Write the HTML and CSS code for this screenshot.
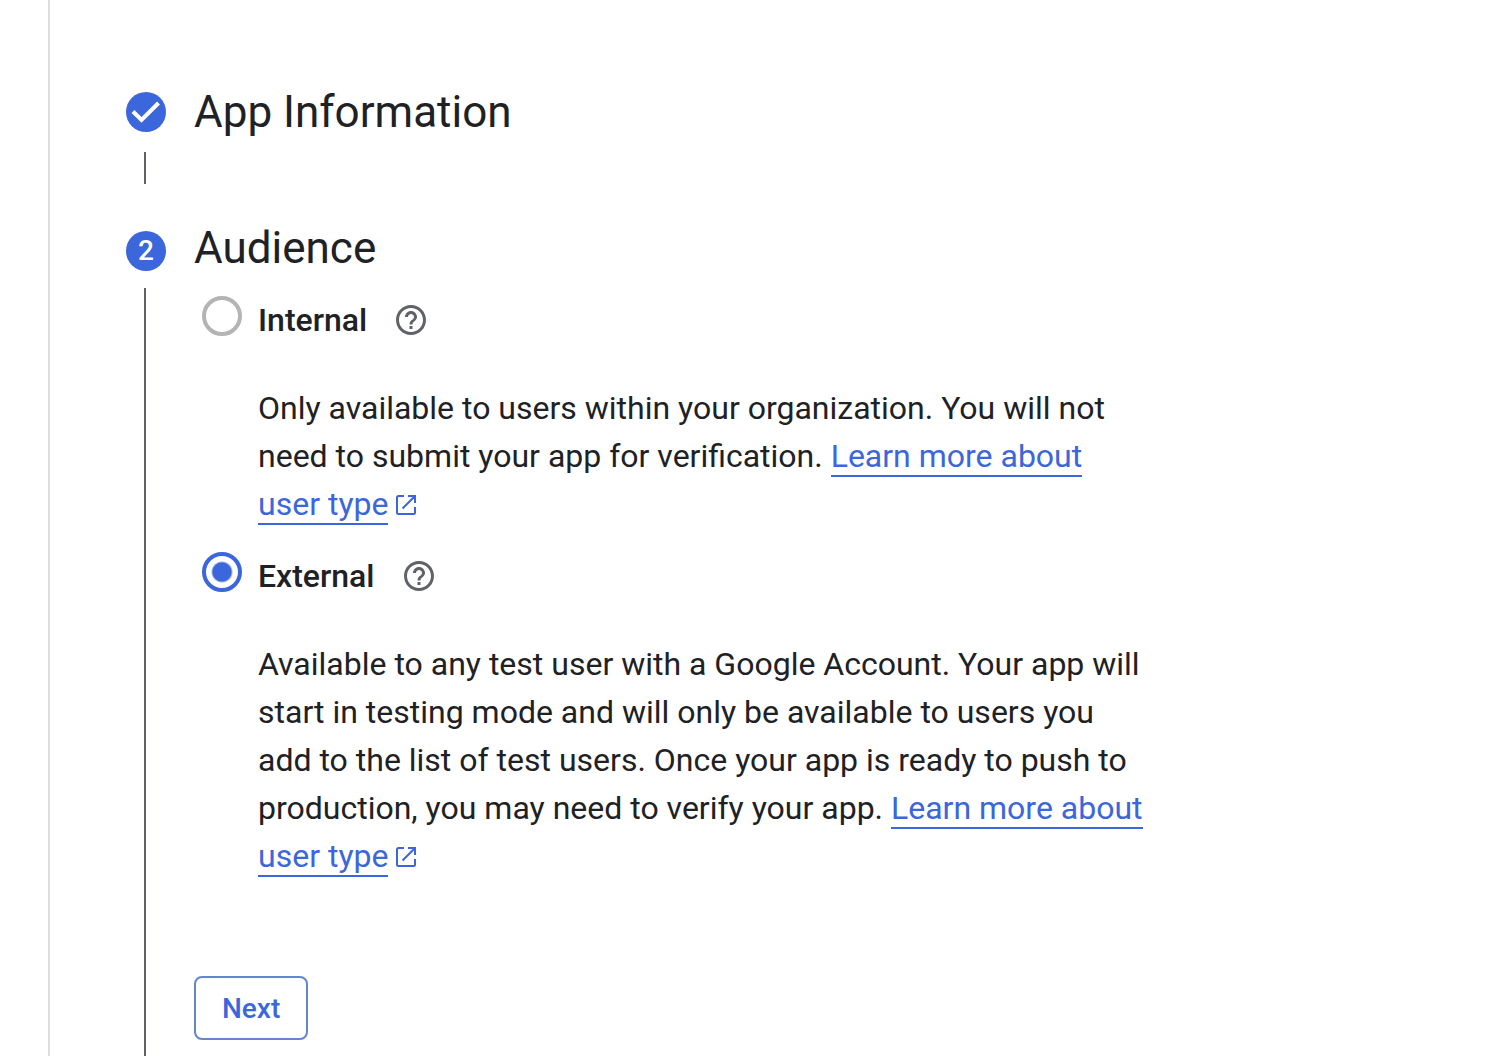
FILE: index.html
```html
<!DOCTYPE html>
<html lang="en">
<head>
    <meta charset="UTF-8">
    <meta name="viewport" content="width=device-width, initial-scale=1.0">
    <title>Project configuration</title>
    <link rel="stylesheet" href="styles.css">
</head>
<body>
    <main class="panel">
        <section class="step">
            <div class="rail">
                <span class="badge">
                    <svg viewBox="0 0 40 40" width="40" height="40" aria-hidden="true">
                        <path d="M7 19.500L15.500 28L32.500 11" fill="none" stroke="#fff" stroke-width="4"/>
                    </svg>
                </span>
                <span class="line line-short"></span>
            </div>
            <h2>App Information</h2>
        </section>

        <section class="step step-active">
            <div class="rail">
                <span class="badge">2</span>
                <span class="line"></span>
            </div>
            <form class="step-content" action="#">
                <h2>Audience</h2>

                <div class="option">
                    <input type="radio" id="internal" name="audience" value="internal">
                    <div class="option-body">
                        <div class="option-title">
                            <label for="internal">Internal</label>
                            <button type="button" class="help" aria-label="Help">
                                <svg viewBox="0 0 24 24" width="36" height="36" aria-hidden="true">
                                    <path d="M11 18h2v-2h-2v2zm1-16C6.480 2 2 6.480 2 12s4.480 10 10 10 10-4.480 10-10S17.520 2 12 2zm0 18c-4.410 0-8-3.590-8-8s3.590-8 8-8 8 3.590 8 8-3.590 8-8 8zm0-14c-2.210 0-4 1.790-4 4h2c0-1.100.9-2 2-2s2 .9 2 2c0 2-3 1.750-3 5h2c0-2.250 3-2.500 3-5 0-2.210-1.790-4-4-4z"/>
                                </svg>
                            </button>
                        </div>
                        <p>Only available to users within your organization. You will not need to submit your app for verification. <a href="#">Learn more about user type</a><svg class="launch" viewBox="0 0 20 20" width="20" height="20" aria-hidden="true"><path d="M8 1H2.500Q1 1 1 2.500V17.500Q1 19 2.500 19H17.500Q19 19 19 17.500V12M12 1h7v7M19 1L6.500 13.500"/></svg></p>
                    </div>
                </div>

                <div class="option">
                    <input type="radio" id="external" name="audience" value="external" checked>
                    <div class="option-body">
                        <div class="option-title">
                            <label for="external">External</label>
                            <button type="button" class="help" aria-label="Help">
                                <svg viewBox="0 0 24 24" width="36" height="36" aria-hidden="true">
                                    <path d="M11 18h2v-2h-2v2zm1-16C6.480 2 2 6.480 2 12s4.480 10 10 10 10-4.480 10-10S17.520 2 12 2zm0 18c-4.410 0-8-3.590-8-8s3.590-8 8-8 8 3.590 8 8-3.590 8-8 8zm0-14c-2.210 0-4 1.790-4 4h2c0-1.100.9-2 2-2s2 .9 2 2c0 2-3 1.750-3 5h2c0-2.250 3-2.500 3-5 0-2.210-1.790-4-4-4z"/>
                                </svg>
                            </button>
                        </div>
                        <p>Available to any test user with a Google Account. Your app will start in testing mode and will only be available to users you add to the list of test users. Once your app is ready to push to production, you may need to verify your app. <a href="#">Learn more about user type</a><svg class="launch" viewBox="0 0 20 20" width="20" height="20" aria-hidden="true"><path d="M8 1H2.500Q1 1 1 2.500V17.500Q1 19 2.500 19H17.500Q19 19 19 17.500V12M12 1h7v7M19 1L6.500 13.500"/></svg></p>
                    </div>
                </div>

                <button type="submit" class="next">Next</button>
            </form>
        </section>
    </main>
</body>
</html>
```
FILE: styles.css
```css
* {
    box-sizing: border-box;
}

body {
    margin: 0;
    background-color: #fff;
    color: #202124;
    font-family: Roboto, Arial, sans-serif;
    font-size: 32px;
    line-height: 48px;
}

.panel {
    display: flex;
    flex-direction: column;
    min-height: 100vh;
    margin-left: 48px;
    padding: 92px 76px 0;
    border-left: 2px solid #dadce0;
}

/* Stepper */
.step {
    display: flex;
    gap: 28px;
    margin-bottom: 44px;
}

.step-active {
    flex: 1;
    margin-bottom: 0;
}

.rail {
    display: flex;
    flex-direction: column;
    flex-shrink: 0;
    width: 40px;
}

.step-active .rail {
    padding-top: 3px;
}

.badge {
    width: 40px;
    height: 40px;
    border-radius: 50%;
    background-color: #3c66db;
    color: #fff;
    font-size: 28px;
    font-weight: 500;
    line-height: 40px;
    text-align: center;
}

.badge svg {
    display: block;
}

.line {
    flex: 1;
    width: 2px;
    margin: 17px 0 0 18px;
    background-color: #5f6368;
}

.line-short {
    flex: none;
    height: 32px;
    margin-top: 20px;
}

h2 {
    margin: 0;
    font-size: 44px;
    font-weight: 400;
    line-height: 40px;
}

.step-content {
    flex: 1;
    padding-bottom: 16px;
}

.step-content h2 {
    margin-bottom: 28px;
}

/* Audience options */
.option {
    display: flex;
    gap: 16px;
    margin-bottom: 24px;
    padding-left: 8px;
}

.option input {
    flex-shrink: 0;
    appearance: none;
    width: 40px;
    height: 40px;
    margin: 0;
    border: 4px solid #b4b4b4;
    border-radius: 50%;
    cursor: pointer;
}

.option input:checked {
    border-color: #3c66db;
    background: radial-gradient(circle, #3c66db 9px, #fff 11px);
}

.option-body {
    max-width: 888px;
}

.option-title {
    display: flex;
    align-items: center;
    gap: 26px;
    margin-bottom: 40px;
}

.option-title label {
    font-weight: 500;
}

.help {
    display: flex;
    padding: 0;
    border: none;
    background: none;
    cursor: pointer;
}

.help svg {
    fill: #5f6368;
}

.option p {
    margin: 0;
}

.option a {
    border-bottom: 2px solid #3c66db;
    color: #3c66db;
    text-decoration: none;
}

.launch {
    margin-left: 8px;
    fill: none;
    stroke: #3c66db;
    stroke-width: 2;
}

.next {
    display: block;
    height: 64px;
    margin-top: 96px;
    padding: 0 26px;
    border: 2px solid #6485d0;
    border-radius: 8px;
    background-color: #fff;
    color: #3c66db;
    font-family: inherit;
    font-size: 28px;
    font-weight: 500;
    cursor: pointer;
}

.next:hover {
    background-color: #f6f9fe;
}
```
